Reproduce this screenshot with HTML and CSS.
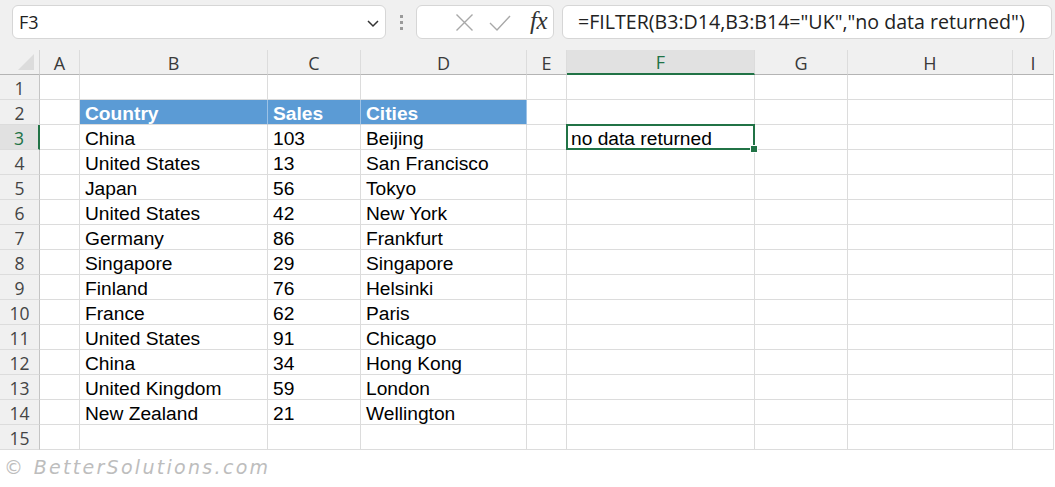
FILE: index.html
```html
<!DOCTYPE html>
<html>
<head>
<meta charset="utf-8">
<link rel="stylesheet" href="styles.css">
</head>
<body>
<div class="toolbar">
  <div class="namebox">
    <span class="name">F3</span>
    <svg class="chev" width="14" height="10" viewBox="0 0 14 10"><polyline points="2,3 7,8 12,3" fill="none" stroke="#333" stroke-width="1.5"/></svg>
  </div>
  <div class="dots"><span></span><span></span><span></span></div>
  <div class="fxbox">
    <svg width="19" height="19" viewBox="0 0 19 19"><path d="M1.5 1.5 L17.5 17.5 M17.5 1.5 L1.5 17.5" stroke="#a8a8a8" stroke-width="1.4" fill="none"/></svg>
    <svg width="22" height="19" viewBox="0 0 22 19"><polyline points="1,10 8,17 21,3" stroke="#a8a8a8" stroke-width="1.4" fill="none"/></svg>
    <span class="fx">fx</span>
  </div>
  <div class="formula">=FILTER(B3:D14,B3:B14="UK","no data returned")</div>
</div>

<div class="sheet">
  <div class="corner"><span class="tri"></span></div>
  <div class="ch">A</div><div class="ch">B</div><div class="ch">C</div><div class="ch">D</div><div class="ch">E</div><div class="ch sel">F</div><div class="ch">G</div><div class="ch">H</div><div class="ch">I</div>

  <div class="rh">1</div><div class="c"></div><div class="c"></div><div class="c"></div><div class="c"></div><div class="c"></div><div class="c"></div><div class="c"></div><div class="c"></div><div class="c"></div>
  <div class="rh">2</div><div class="c"></div><div class="c hd">Country</div><div class="c hd">Sales</div><div class="c hd">Cities</div><div class="c"></div><div class="c"></div><div class="c"></div><div class="c"></div><div class="c"></div>
  <div class="rh sel">3</div><div class="c"></div><div class="c">China</div><div class="c">103</div><div class="c">Beijing</div><div class="c"></div><div class="c active">no data returned<span class="handle"></span></div><div class="c"></div><div class="c"></div><div class="c"></div>
  <div class="rh">4</div><div class="c"></div><div class="c">United States</div><div class="c">13</div><div class="c">San Francisco</div><div class="c"></div><div class="c"></div><div class="c"></div><div class="c"></div><div class="c"></div>
  <div class="rh">5</div><div class="c"></div><div class="c">Japan</div><div class="c">56</div><div class="c">Tokyo</div><div class="c"></div><div class="c"></div><div class="c"></div><div class="c"></div><div class="c"></div>
  <div class="rh">6</div><div class="c"></div><div class="c">United States</div><div class="c">42</div><div class="c">New York</div><div class="c"></div><div class="c"></div><div class="c"></div><div class="c"></div><div class="c"></div>
  <div class="rh">7</div><div class="c"></div><div class="c">Germany</div><div class="c">86</div><div class="c">Frankfurt</div><div class="c"></div><div class="c"></div><div class="c"></div><div class="c"></div><div class="c"></div>
  <div class="rh">8</div><div class="c"></div><div class="c">Singapore</div><div class="c">29</div><div class="c">Singapore</div><div class="c"></div><div class="c"></div><div class="c"></div><div class="c"></div><div class="c"></div>
  <div class="rh">9</div><div class="c"></div><div class="c">Finland</div><div class="c">76</div><div class="c">Helsinki</div><div class="c"></div><div class="c"></div><div class="c"></div><div class="c"></div><div class="c"></div>
  <div class="rh">10</div><div class="c"></div><div class="c">France</div><div class="c">62</div><div class="c">Paris</div><div class="c"></div><div class="c"></div><div class="c"></div><div class="c"></div><div class="c"></div>
  <div class="rh">11</div><div class="c"></div><div class="c">United States</div><div class="c">91</div><div class="c">Chicago</div><div class="c"></div><div class="c"></div><div class="c"></div><div class="c"></div><div class="c"></div>
  <div class="rh">12</div><div class="c"></div><div class="c">China</div><div class="c">34</div><div class="c">Hong Kong</div><div class="c"></div><div class="c"></div><div class="c"></div><div class="c"></div><div class="c"></div>
  <div class="rh">13</div><div class="c"></div><div class="c">United Kingdom</div><div class="c">59</div><div class="c">London</div><div class="c"></div><div class="c"></div><div class="c"></div><div class="c"></div><div class="c"></div>
  <div class="rh">14</div><div class="c"></div><div class="c">New Zealand</div><div class="c">21</div><div class="c">Wellington</div><div class="c"></div><div class="c"></div><div class="c"></div><div class="c"></div><div class="c"></div>
  <div class="rh">15</div><div class="c"></div><div class="c"></div><div class="c"></div><div class="c"></div><div class="c"></div><div class="c"></div><div class="c"></div><div class="c"></div><div class="c"></div>
</div>

<div class="watermark">© BetterSolutions.com</div>
</body>
</html>
```

FILE: styles.css
```css
html, body {
  margin: 0;
  padding: 0;
  background: #ffffff;
}
body {
  width: 1055px;
  height: 487px;
  overflow: hidden;
  font-family: "Liberation Sans", Arial, sans-serif;
}
.toolbar {
  height: 50px;
  background: #f0f0f0;
  display: flex;
  align-items: flex-start;
  padding: 5px 3px 0 12px;
  box-sizing: border-box;
}
.namebox {
  width: 374px;
  height: 34px;
  box-sizing: border-box;
  background: #fff;
  border: 1px solid #d6d6d6;
  border-radius: 6px;
  display: flex;
  align-items: center;
  justify-content: space-between;
  padding: 0 5px 0 6px;
  font-family: "Open Sans", sans-serif;
  font-size: 18px;
  color: #222;
}
.chev { margin-top: 1px; }
.dots {
  width: 30px;
  height: 34px;
  display: flex;
  flex-direction: column;
  align-items: center;
  justify-content: center;
  gap: 3px;
}
.dots span {
  width: 3px;
  height: 3px;
  background: #9a9a9a;
}
.fxbox {
  width: 138px;
  height: 34px;
  box-sizing: border-box;
  background: #fff;
  border: 1px solid #d6d6d6;
  border-radius: 6px;
  display: flex;
  align-items: center;
  padding: 1px 4px 0 38px;
  gap: 15px;
}
.fx {
  font-family: "Liberation Serif", "DejaVu Serif", serif;
  font-style: italic;
  font-size: 25px;
  line-height: 28px;
  color: #333;
  margin-left: 4px;
  margin-top: -3px;
  letter-spacing: -0.5px;
}
.formula {
  flex: 1;
  margin-left: 8px;
  height: 34px;
  box-sizing: border-box;
  background: #fff;
  border: 1px solid #d6d6d6;
  border-radius: 6px;
  padding-left: 15px;
  font-family: "Open Sans", sans-serif;
  font-size: 19.6px;
  line-height: 32px;
  color: #222;
  white-space: nowrap;
  overflow: hidden;
}

.sheet {
  display: grid;
  grid-template-columns: 40px 40px 188px 93px 166px 40px 188px 93px 165px 41px;
  grid-template-rows: 25px repeat(15, 25px);
  background: #fff;
}
.corner {
  background: #f0f0f0;
  border-bottom: 1px solid #b4b4b4;
  border-right: 1px solid #d4d4d4;
  position: relative;
}
.tri {
  position: absolute;
  right: 5px;
  bottom: 4px;
  width: 0;
  height: 0;
  border-left: 16px solid transparent;
  border-bottom: 16px solid #dcdcdc;
}
.ch {
  background: #f0f0f0;
  border-bottom: 1px solid #b4b4b4;
  border-right: 1px solid #dcdcdc;
  text-align: center;
  font-family: "Open Sans", sans-serif;
  font-size: 18px;
  line-height: 26px;
  color: #3a3a3a;
}
.ch.sel {
  background: #e1e1e1;
  border-bottom: 2px solid #217346;
  color: #217346;
  line-height: 25px;
}
.rh {
  background: #f0f0f0;
  border-bottom: 1px solid #dcdcdc;
  border-right: 1px solid #c4c4c4;
  text-align: center;
  font-family: "Open Sans", sans-serif;
  font-size: 17.5px;
  line-height: 26px;
  color: #444;
}
.rh.sel {
  background: #e1e1e1;
  border-right: 2px solid #217346;
  color: #217346;
}
.c {
  border-right: 1px solid #dcdcdc;
  border-bottom: 1px solid #dcdcdc;
  font-size: 19.2px;
  line-height: 22px;
  padding: 3px 0 0 5px;
  color: #000;
  white-space: nowrap;
  overflow: visible;
}
.c.hd {
  background: #5b9bd5;
  color: #fff;
  font-weight: bold;
  border-right-color: #9cc2e6;
}
.c.active {
  position: relative;
  padding-left: 4px;
}
.c.active::after {
  content: "";
  position: absolute;
  left: -1px;
  top: -1px;
  right: -1px;
  bottom: -1px;
  border: 2px solid #217346;
}
.handle {
  position: absolute;
  right: -4px;
  bottom: -4px;
  width: 6px;
  height: 6px;
  background: #217346;
  border: 1px solid #fff;
  z-index: 2;
}
.watermark {
  padding: 6px 0 0 4px;
  font-family: "DejaVu Sans", sans-serif;
  font-style: italic;
  font-size: 19px;
  letter-spacing: 2.3px;
  color: #bdbdbd;
}
```
